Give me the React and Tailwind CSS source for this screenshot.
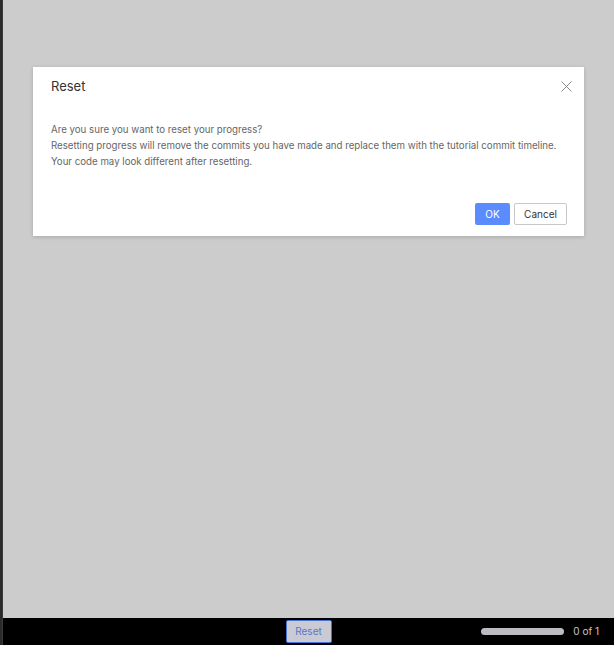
import React from 'react'

function CloseIcon() {
  return (
    <svg width="11" height="11" viewBox="0 0 11 11" fill="none" stroke="#8a8a8a" strokeWidth="1">
      <path d="M0.5 0.5 L10.5 10.5 M10.5 0.5 L0.5 10.5" />
    </svg>
  )
}

export default function App() {
  return (
    <div
      className="flex h-[645px] w-[614px] overflow-hidden bg-black"
      style={{ fontFamily: 'Inter, "Noto Sans", sans-serif' }}
    >
      {/* left edge strip */}
      <div className="w-[3px] shrink-0 bg-[#2b2b2b] border-r border-[#3a3a3a]" />

      <div className="flex min-w-0 flex-1 flex-col">
        {/* backdrop */}
        <div className="flex-1 bg-[#cccccc] pt-[67px] pl-[30px] pr-[30px]">
          <div className="flex h-[169px] flex-col bg-white shadow-[0_1px_4px_rgba(0,0,0,0.18)]">
            <div className="flex items-center justify-between pl-[18px] pr-[12px] pt-[10px]">
              <h2 className="text-[13px] leading-[18px] text-[#333]">Reset</h2>
              <CloseIcon />
            </div>
            <div className="pl-[18px] pt-[27px] text-[9.7px] leading-[16px] text-[#666]">
              <p>Are you sure you want to reset your progress?</p>
              <p>Resetting progress will remove the commits you have made and replace them with the tutorial commit timeline.</p>
              <p>Your code may look different after resetting.</p>
            </div>
            <div className="mt-auto flex justify-end gap-[4px] pr-[17px] pb-[11px]">
              <button className="h-[22px] w-[35px] rounded-[2px] bg-[#5a8cff] text-[10px] text-white">OK</button>
              <button className="h-[22px] w-[53px] rounded-[2px] border border-[#c8c8c8] bg-white text-[10px] text-[#333]">Cancel</button>
            </div>
          </div>
        </div>

        {/* bottom bar */}
        <div className="relative flex h-[27px] shrink-0 items-center bg-black">
          <div className="flex flex-1 justify-center">
            <button className="h-[23px] w-[46px] rounded-[2px] border border-[#4b72d8] bg-[#c9cad3] text-[10px] text-[#5a78cc]">
              Reset
            </button>
          </div>
          <div className="absolute right-[15px] top-0 flex h-full items-center gap-[9px]">
            <div className="h-[7px] w-[83px] rounded-full bg-[#bcbcc0]" />
            <span className="text-[10px] text-[#c8c8c8]">0 of 1</span>
          </div>
        </div>
      </div>
    </div>
  )
}
